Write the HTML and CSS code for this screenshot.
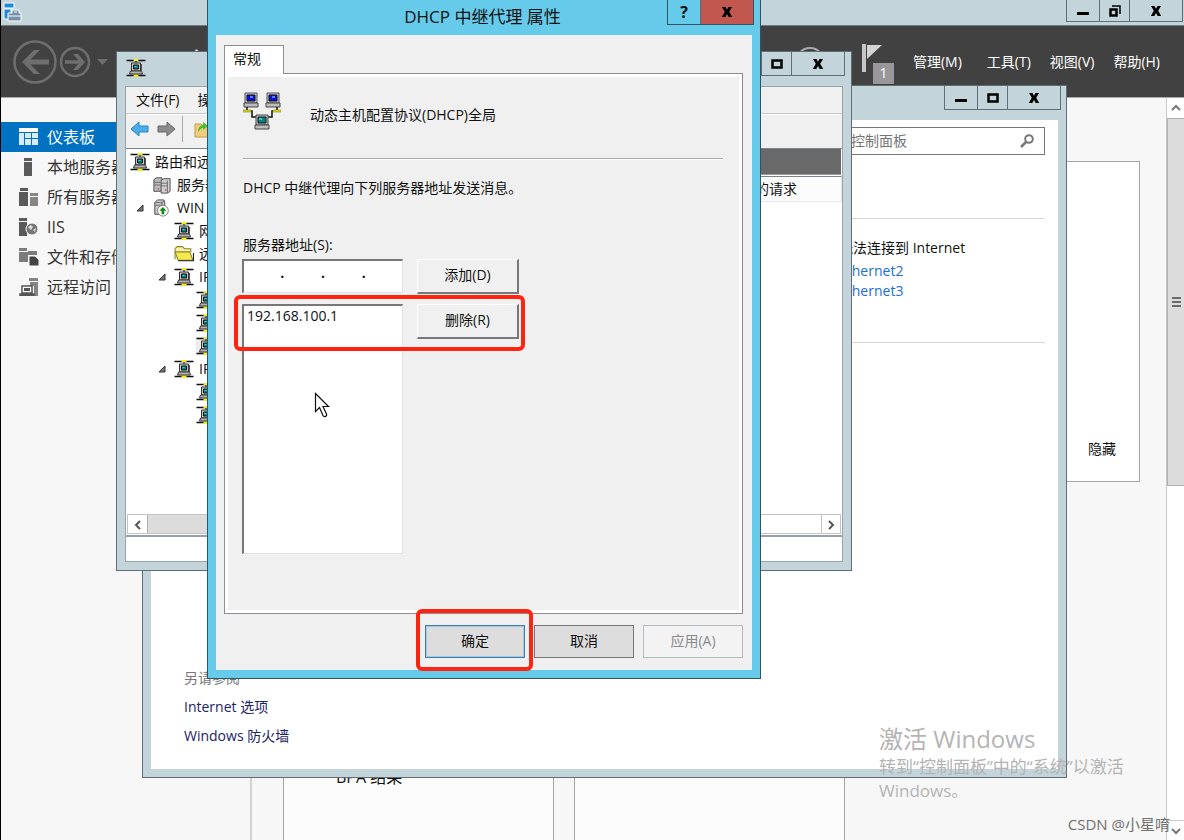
FILE: index.html
```html
<!DOCTYPE html>
<html lang="zh-CN">
<head>
<meta charset="utf-8">
<title>DHCP 中继代理 属性</title>
<link rel="stylesheet" href="styles.css">
</head>
<body>
<svg class="defs" aria-hidden="true">
  <symbol id="net" viewBox="0 0 19 18">
    <path d="M0 1.500h19M0 16.500h19" stroke="#111" stroke-width="1.600"/>
    <path d="M7 0h5v2H7zM7 15h5v3H7z" fill="#f2ee1c"/>
    <path d="M9.500 2v2" stroke="#111"/>
    <path d="M5 4h9v8H5z" fill="#c9c9c9" stroke="#333"/>
    <path d="M7 6h5v4H7z" fill="#087f80" stroke="#111"/>
    <path d="M8 7h2v1H8z" fill="#35e0d8"/>
    <path d="M4 12h11l1 3H3z" fill="#b4b4b4" stroke="#333"/>
    <path d="M15 5v8" stroke="#555"/>
  </symbol>
  <symbol id="servers" viewBox="0 0 20 20">
    <path d="M1 4l3-2h6v14l-2 1H1z" fill="#bcbcbc" stroke="#444"/>
    <path d="M9 5l3-2h7v14l-3 2H9z" fill="#d0d0d0" stroke="#444"/>
    <path d="M1 7h7M1 10h7M9 8h7M9 11h7M16 5v14" stroke="#666"/>
    <path d="M5 14h2v1H5zM13 15h2v1h-2z" fill="#d22"/>
  </symbol>
  <symbol id="host" viewBox="0 0 20 20">
    <path d="M2 4l3-3h7l1 2v14H2z" fill="#c8c8c8" stroke="#444"/>
    <path d="M2 4h8l3-2M2 7h8M10 4v5" stroke="#666" fill="none"/>
    <circle cx="11" cy="13" r="6" fill="#fff" stroke="#777"/>
    <path d="M11 9l4 4h-2.500v4h-3v-4H7z" fill="#118a18"/>
  </symbol>
  <symbol id="folder" viewBox="0 0 19 16">
    <path d="M1 13V3l2-2h5l2 2h6v3" fill="#f8f3a0" stroke="#8a8430"/>
    <path d="M1 6h14l3 8H4z" fill="#f4ea4e" stroke="#8a8430"/>
    <path d="M4 14.500h14.500V7" stroke="#222" fill="none"/>
  </symbol>
  <symbol id="twisty" viewBox="0 0 8 8"><path d="M7 1v6H1z" fill="#777" stroke="#333"/></symbol>
  <symbol id="min" viewBox="0 0 14 12"><path d="M1 7h12v3H1z"/></symbol>
  <symbol id="max" viewBox="0 0 14 12"><path d="M2.500 2.500h9v7h-9z" fill="none" stroke="#000" stroke-width="2.500"/></symbol>
  <symbol id="restore" viewBox="0 0 14 12"><path d="M2.500 4.500h6v6h-6z" fill="none" stroke="#000" stroke-width="2.500"/><path d="M4 1h8v8" fill="none" stroke="#000" stroke-width="1.500"/></symbol>
  <symbol id="close" viewBox="0 0 14 12"><path d="M2 1h3.500l1.500 2.700L8.500 1H12L9.200 5.800 12.200 11H8.700L7 8 5.300 11H1.800l3-5.200z"/></symbol>
</svg>

<main class="desktop">
  <section class="manager">
    <header class="manager-title">
      <svg class="app-icon" viewBox="0 0 20 20"><path d="M1 1h10v5H1zM1 7h7v10H1z" fill="#2089d8" stroke="#fff"/><path d="M5 11h4V8h7v3h2v8H5z" fill="#7592a8" stroke="#fff"/><path d="M5 14h13M11 10h3" stroke="#fff"/></svg>
      <div class="win-buttons">
        <button aria-label="最小化"><svg><use href="#min"/></svg></button>
        <button class="mid" aria-label="还原"><svg><use href="#restore"/></svg></button>
        <button class="wide" aria-label="关闭"><svg><use href="#close"/></svg></button>
      </div>
    </header>
    <div class="banner">
      <svg class="nav-arrows" viewBox="0 0 100 46" fill="none">
        <circle cx="23" cy="23" r="20.500" stroke="#6e6e6e" stroke-width="2.500"/>
        <path d="M10 23L22 11h6L18.500 20.500H37v5H18.500L28 35h-6z" fill="#6e6e6e"/>
        <circle cx="63" cy="23" r="14" stroke="#6e6e6e" stroke-width="2.500"/>
        <path d="M73 23l-7-8h-5l5.500 6.200H53v3.600h13.500L61 31h5z" fill="#6e6e6e"/>
        <path d="M85 20h11l-5.500 6z" fill="#6e6e6e"/>
      </svg>
      <h1 class="banner-title">服务</h1>
      <div class="banner-tools">
        <svg class="refresh" viewBox="0 0 32 32"><circle cx="16" cy="16" r="14" fill="none" stroke="#aaa" stroke-width="2"/></svg>
        <div class="flag">
          <svg viewBox="0 0 20 28"><path d="M0 0h4v28H0z" fill="#c6c6c6"/><path d="M5 1h15L5 15z" fill="#d4d4d4"/></svg>
          <span class="badge">1</span>
        </div>
        <button class="first">管理(M)</button>
        <button>工具(T)</button>
        <button>视图(V)</button>
        <button>帮助(H)</button>
      </div>
    </div>
    <div class="manager-body">
      <nav class="side">
        <a href="#dash" class="on"><svg viewBox="0 0 20 18" fill="#d8ebf8"><path d="M0 0h19v4H0z" fill="#fff"/><path d="M0 5h5v12H0zM6 5h6v5H6zM13 5h6v5h-6zM6 11h6v6H6zM13 11h6v6h-6z"/></svg>仪表板</a>
        <a href="#local"><svg viewBox="0 0 20 18" fill="#5a5a5a"><path d="M5 0h8v3H5zM5 4h8v14H5z"/></svg>本地服务器</a>
        <a href="#all"><svg viewBox="0 0 20 18" fill="#5a5a5a"><path d="M1 0h8v3H1zM0 4h9v14H0z"/><path d="M11 5h8v3h-8zM11 9h8v9h-8z" fill="#858585"/></svg>所有服务器</a>
        <a href="#iis"><svg viewBox="0 0 20 18" fill="#5a5a5a"><path d="M0 0h8v3H0zM0 4h8v14H0z"/><circle cx="13" cy="11" r="6" fill="#777" stroke="#f7f7f7"/><path d="M9 9l3-2 2 2-2 3zM14 12l3-2-1 4z" fill="#ddd"/></svg>IIS</a>
        <a href="#files"><svg viewBox="0 0 20 18" fill="#7c7c7c"><path d="M0 0h8v3H0zM0 4h9v10H0zM9 3h9v4H9z"/><path d="M10 8h6l4 4v6H10z" fill="#444" stroke="#f7f7f7"/></svg>文件和存储服务</a>
        <a href="#remote"><svg viewBox="0 0 20 18"><path d="M10 0h9v3h-9zM11 4h8v14h-4V8h-4z" fill="#858585"/><path d="M3 8h10v7H3zM1 16h14v1.500H1z" fill="#fff" stroke="#555" stroke-width="1.500"/><path d="M5 10h6v3H5z" fill="#555"/></svg>远程访问</a>
      </nav>
      <div class="board">
        <div class="welcome"><button>隐藏</button></div>
        <div class="tiles">
          <div class="tile">BPA 结果</div>
          <div class="tile"></div>
        </div>
      </div>
      <div class="vscroll">
        <button aria-label="向上"><svg viewBox="0 0 10 10"><path d="M1 7l4-4 4 4" fill="none" stroke="#777" stroke-width="2"/></svg></button>
        <div class="thumb"><i></i><i></i><i></i></div>
        <button class="down" aria-label="向下"><svg viewBox="0 0 10 10"><path d="M1 3l4 4 4-4" fill="none" stroke="#777" stroke-width="2"/></svg></button>
      </div>
    </div>
  </section>

  <section class="window control">
    <header class="win-title">
      <div class="win-buttons">
        <button aria-label="最小化"><svg><use href="#min"/></svg></button>
        <button class="mid" aria-label="最大化"><svg><use href="#max"/></svg></button>
        <button class="wide" aria-label="关闭"><svg><use href="#close"/></svg></button>
      </div>
    </header>
    <div class="control-body">
      <div class="search-row">
        <label class="search">
          <input type="text" placeholder="搜索控制面板" aria-label="搜索控制面板">
          <svg viewBox="0 0 14 14"><circle cx="9" cy="5" r="3.800" fill="none" stroke="#777" stroke-width="2"/><path d="M6 8l-5 5" stroke="#777" stroke-width="2.500"/></svg>
        </label>
      </div>
      <div class="net-info">
        <p>无法连接到 Internet</p>
        <a href="#e2">Ethernet2</a>
        <a href="#e3">Ethernet3</a>
      </div>
      <div class="see-also">
        <h2>另请参阅</h2>
        <a href="#opt">Internet 选项</a>
        <a href="#fw">Windows 防火墙</a>
      </div>
    </div>
  </section>

  <section class="window routing">
    <header class="win-title">
      <svg class="net title-net"><use href="#net"/></svg>
      <div class="win-buttons">
        <button aria-label="最小化"><svg><use href="#min"/></svg></button>
        <button class="mid" aria-label="最大化"><svg><use href="#max"/></svg></button>
        <button class="wide" aria-label="关闭"><svg><use href="#close"/></svg></button>
      </div>
    </header>
    <div class="routing-body">
      <div class="menu"><button>文件(F)</button><button>操作(A)</button></div>
      <div class="toolbar">
        <svg viewBox="0 0 20 16"><path d="M1 8l8-7v4h9v6H9v4z" fill="#49adea" stroke="#2d83bd"/></svg>
        <svg viewBox="0 0 20 16"><path d="M19 8l-8-7v4H2v6h9v4z" fill="#8c8c8c" stroke="#666"/></svg>
        <span class="bar"></span>
        <svg viewBox="0 0 20 18"><path d="M1 4h6l2 2h10v11H1z" fill="#f0cd7c" stroke="#c79a3e"/><path d="M4 12c0-5 3-7 5-7V2l5 4-5 4V8c-2 0-3 2-5 4z" fill="#4cbb2f"/></svg>
      </div>
      <div class="panes">
        <div class="tree-pane">
          <ul class="tree">
            <li><svg class="net"><use href="#net"/></svg>路由和远程</li>
            <li class="l1"><svg class="net"><use href="#servers"/></svg>服务器</li>
            <li class="l1"><svg class="twisty"><use href="#twisty"/></svg><svg class="net"><use href="#host"/></svg>WIN</li>
            <li class="l2"><svg class="net"><use href="#net"/></svg>网络</li>
            <li class="l2"><svg class="net"><use href="#folder"/></svg>远程</li>
            <li class="l2"><svg class="twisty"><use href="#twisty"/></svg><svg class="net"><use href="#net"/></svg>IPv4</li>
            <li class="l3"><svg class="net"><use href="#net"/></svg></li>
            <li class="l3"><svg class="net"><use href="#net"/></svg></li>
            <li class="l3 sel"><svg class="net"><use href="#net"/></svg></li>
            <li class="l2"><svg class="twisty"><use href="#twisty"/></svg><svg class="net"><use href="#net"/></svg>IPv6</li>
            <li class="l3"><svg class="net"><use href="#net"/></svg></li>
            <li class="l3"><svg class="net"><use href="#net"/></svg></li>
          </ul>
          <div class="hscroll">
            <button aria-label="向左"><svg viewBox="0 0 10 10"><path d="M7 1L3 5l4 4" fill="none" stroke="#555" stroke-width="2"/></svg></button>
            <div class="hthumb"></div>
          </div>
        </div>
        <div class="detail-pane">
          <div class="band"></div>
          <div class="list-head">的请求</div>
          <div class="hscroll right">
            <button aria-label="向右"><svg viewBox="0 0 10 10"><path d="M3 1l4 4-4 4" fill="none" stroke="#555" stroke-width="2"/></svg></button>
          </div>
        </div>
      </div>
      <div class="status"></div>
    </div>
  </section>

  <section class="dialog" role="dialog" aria-labelledby="dlg-title">
    <header class="dialog-title">
      <h2 id="dlg-title">DHCP 中继代理 属性</h2>
      <div class="win-buttons">
        <button class="help" aria-label="帮助">?</button>
        <button class="wide red" aria-label="关闭"><svg><use href="#close"/></svg></button>
      </div>
    </header>
    <form class="dialog-body">
      <div class="tabs"><button type="button" class="tab">常规</button></div>
      <div class="sheet">
        <div class="intro">
          <svg class="dhcp" viewBox="0 0 38 38">
            <g id="pc"><path d="M2 1h12v10H2z" fill="#c6c6c6" stroke="#555"/><path d="M4 3h8v6H4z" fill="#0a12d8" stroke="#111"/><path d="M7 4h3v2H7z" fill="#5c7cf0"/><path d="M1 11h14v4H1z" fill="#bdbdbd" stroke="#444"/></g>
            <use href="#pc" x="22"/>
            <path d="M4 15v4h5v6h5M34 15v4h-5v6h-5" fill="none" stroke="#111" stroke-width="1.500"/>
            <path d="M0 18h8v2H0zM30 18h8v2h-8z" fill="#dfd81a" stroke="#8a8610" stroke-width=".6"/>
            <path d="M13 23h12v10H13z" fill="#c6c6c6" stroke="#444"/><path d="M15 25h8v6h-8z" fill="#078484" stroke="#111"/><path d="M16 26h3v2h-3z" fill="#3cc"/><path d="M12 33h14v4H12z" fill="#bdbdbd" stroke="#444"/>
          </svg>
          <span>动态主机配置协议(DHCP)全局</span>
        </div>
        <p class="note">DHCP 中继代理向下列服务器地址发送消息。</p>
        <label class="addr-label" for="ip1">服务器地址(S):</label>
        <div class="row">
          <div class="ip"><input id="ip1" type="text"><b>·</b><input type="text" aria-label="2"><b>·</b><input type="text" aria-label="3"><b>·</b><input type="text" aria-label="4"></div>
          <button type="button" class="classic">添加(D)</button>
        </div>
        <div class="row">
          <select class="list" size="10" aria-label="服务器地址"><option>192.168.100.1</option></select>
          <button type="button" class="classic">删除(R)</button>
        </div>
      </div>
      <div class="actions">
        <button type="button" class="default">确定</button>
        <button type="button">取消</button>
        <button type="button" disabled>应用(A)</button>
      </div>
    </form>
    <div class="mark mark-list"></div>
    <div class="mark mark-ok"></div>
    <svg class="cursor" viewBox="0 0 16 26"><path d="M1.500 1.500v18l4-4 3.500 8c1 2 4.500 1 3.500-1.500L9 14.500h5.500z" fill="#fff" stroke="#111" stroke-width="1.200"/></svg>
  </section>

  <div class="activate"><strong>激活 Windows</strong><span>转到“控制面板”中的“系统”以激活 Windows。</span></div>
  <div class="credit">CSDN @小星唷</div>
</main>
</body>
</html>
```
FILE: styles.css
```css
* { box-sizing: border-box; }
body {
  margin: 0;
  font: 14px/20px "Open Sans", "Noto Sans CJK SC", sans-serif;
  color: #111;
}
button, input, select { font: inherit; color: inherit; }
button { margin: 0; padding: 0; border: 0; background: none; white-space: nowrap; }
h1, h2, p, ul { margin: 0; padding: 0; font-weight: normal; }
a { text-decoration: none; }
.defs { position: absolute; width: 0; height: 0; }

.desktop { position: relative; height: 100vh; overflow: hidden; }

/* window caption buttons */
.win-buttons { display: flex; align-self: flex-start; border: 1px solid #5f6d75; border-top: 0; }
.win-buttons button { width: 32px; height: 23px; display: grid; place-items: center; }
.win-buttons button + button { border-left: 1px solid #5f6d75; }
.win-buttons .mid { width: 30px; }
.win-buttons .wide { width: 53px; }
.win-buttons svg { width: 14px; height: 12px; }

/* server manager */
.manager { height: 100%; display: flex; flex-direction: column; border-left: 1px solid #000; background: #f7f7f7; }
.manager-title { height: 26px; display: flex; justify-content: space-between; padding: 0 1px 0 2px; background: #c3d5db; border-bottom: 1px solid #6f7d84; }
.manager-title .win-buttons button { height: 21px; }
.app-icon { width: 20px; height: 20px; margin-top: 2px; }
.banner { height: 72px; flex: none; display: flex; align-items: center; padding: 0 24px 0 11px; background: #414141; border-bottom: 1px solid #aaa; color: #fff; }
.nav-arrows { width: 100px; height: 46px; }
.banner-title { margin-left: 48px; font-size: 26px; line-height: 32px; }
.banner-tools { flex: 1; display: flex; justify-content: flex-end; align-items: center; gap: 19px; }
.banner-tools .first { margin-right: 6px; }
.refresh { width: 32px; height: 32px; margin-right: 17px; }
.flag { position: relative; width: 32px; height: 40px; margin-top: 4px; }
.flag svg { width: 20px; height: 28px; display: block; }
.badge { position: absolute; right: 0; bottom: 0; width: 21px; height: 21px; background: #9a979b; text-align: center; }

.manager-body { flex: 1; min-height: 0; display: flex; }
.side { width: 251px; padding-top: 24px; border-right: 2px solid #d2d2d2; }
.side a { display: flex; align-items: center; gap: 8px; height: 30px; padding-left: 18px; font-size: 16px; color: #333; }
.side svg { width: 20px; height: 18px; }
.side .on { background: #0072c1; color: #fff; }
.board { flex: 1; display: flex; flex-direction: column; gap: 40px; padding: 63px 26px 0 31px; }
.welcome { height: 321px; flex: none; display: flex; justify-content: flex-end; align-items: flex-end; padding: 0 23px 22px; background: #fff; border: 1px solid #a5a5a5; }
.tiles { flex: 1; display: grid; grid-template-columns: 271px 271px; gap: 20px; }
.tile { display: flex; align-items: flex-end; padding: 0 0 53px 52px; font-size: 16px; background: #fcfcfc; border: 1px solid #a5a5a5; border-bottom: 0; }
.vscroll { width: 18px; display: flex; flex-direction: column; background: #fff; border-left: 1px solid #c8c8c8; }
.vscroll button { height: 20px; background: #fff; }
.vscroll svg { width: 10px; height: 10px; }
.vscroll .down { margin-top: auto; border-top: 1px solid #ccc; }
.thumb { height: 368px; display: flex; flex-direction: column; align-items: center; justify-content: center; gap: 2px; background: #dcdcdc; border: 1px solid #b0b0b0; border-right: 0; }
.thumb i { width: 9px; height: 2px; background: #6b6b6b; }

/* shared window frame */
.window { position: absolute; display: flex; flex-direction: column; padding: 0 8px 8px; background: #c3d5db; border: 1px solid #5f6d75; }
.win-title { height: 34px; flex: none; display: flex; justify-content: space-between; }
.win-title .win-buttons { margin: 0 -3px 0 auto; }

.control { left: 142px; top: 85px; width: 925px; height: 693px; }
.control-body { flex: 1; display: flex; flex-direction: column; background: #fff; padding: 7px 13px 23px 33px; }
.search-row { height: 92px; border-bottom: 1px solid #d5d5d5; display: flex; justify-content: flex-end; align-items: flex-start; }
.search { width: 232px; height: 28px; display: flex; align-items: center; padding: 0 10px 0 9px; border: 1px solid #777; }
.search input { flex: 1; min-width: 0; border: 0; padding: 0; background: none; outline: 0; }
.search input::placeholder { color: #757575; }
.search svg { width: 14px; height: 14px; }
.net-info { height: 124px; padding: 19px 0 0 655px; border-bottom: 1px solid #d5d5d5; }
.net-info p { margin-bottom: 3px; }
.net-info a { display: block; color: #1a6fd0; }
.see-also { margin-top: auto; }
.see-also h2 { font-size: 14px; line-height: 20px; color: #777; }
.see-also a { display: block; margin-top: 9px; color: #1a2268; }

.routing { left: 116px; top: 51px; width: 736px; height: 520px; }
.routing .win-buttons { margin-right: -2px; }
.title-net { margin: 7px 0 0 1px; }
.routing-body { flex: 1; min-height: 0; display: flex; flex-direction: column; background: #f0f0f0; border: 1px solid #9aa5ab; }
.menu { height: 27px; flex: none; display: flex; gap: 18px; padding-left: 10px; border-bottom: 1px solid #c8c8c8; }
.toolbar { height: 34px; flex: none; display: flex; align-items: flex-start; gap: 6px; padding: 5px 0 0 4px; border-top: 1px solid #fff; }
.toolbar svg { width: 20px; height: 18px; }
.toolbar .bar { width: 1px; height: 26px; margin: -4px 5px 0 0; background: #a8a8a8; }
.panes { flex: 1; min-height: 0; display: flex; border-top: 1px solid #7b838c; border-bottom: 2px solid #9a9fa5; }
.tree-pane { width: 300px; display: flex; flex-direction: column; background: #fff; border-right: 1px solid #7b838c; }
.tree { flex: 1; padding-top: 1px; list-style: none; }
.tree li { height: 23px; display: flex; align-items: center; gap: 5px; padding-left: 4px; }
.net { width: 20px; height: 18px; flex: none; }
.tree .l1 { padding-left: 26px; }
.tree .l2 { padding-left: 48px; }
.tree .l3 { padding-left: 70px; }
.twisty { width: 8px; height: 8px; margin: 0 3px 0 -16px; }
.tree .sel svg { background: #ececec; }
.hscroll { height: 20px; margin: 0 1px 1px; display: flex; background: #fff; border: 1px solid #c4c4c4; }
.hscroll button { width: 19px; background: #fff; }
.hscroll svg { width: 10px; height: 10px; }
.hthumb { flex: 1; background: #dcdcdc; border-left: 1px solid #b0b0b0; }
.detail-pane { flex: 1; display: flex; flex-direction: column; background: #fff; }
.band { height: 26px; background: #696969; margin-right: 1px; border-bottom: 1px solid #999; }
.list-head { height: 26px; margin: 1px 0 0; padding: 2px 0 0 328px; background: #fcfcfc; border: 1px solid #e6e6e6; border-top-color: #7b838c; }
.right { margin-top: auto; justify-content: flex-end; }
.right button { border-left: 1px solid #c4c4c4; }
.status { height: 24px; flex: none; background: #fff; }

/* properties dialog */
.dialog { position: absolute; left: 207px; top: -1px; width: 554px; height: 680px; display: flex; flex-direction: column; padding: 0 8px 8px; background: #66cbea; border: 1px solid #34525f; }
.dialog-title { height: 35px; flex: none; display: flex; justify-content: flex-end; }
.dialog-title h2 { flex: 1; padding-left: 82px; font-size: 17px; line-height: 34px; text-align: center; }
.dialog-title .win-buttons { margin-right: -2px; border-color: #34525f; }
.dialog-title button { height: 24px; }
.help { font-weight: bold; font-size: 16px; }
.red { background: #c1574f; }
.dialog-body { flex: 1; display: flex; flex-direction: column; padding: 10px 9px 12px 8px; background: #f0f0f0; }
.tabs { display: flex; }
.tab { width: 60px; height: 29px; margin-bottom: -1px; padding: 0 14px 2px 0; z-index: 1; background: #fff; border: 1px solid #8c8e96; border-bottom: 0; }
.sheet { flex: 1; padding: 14px 15px 0; background: #f0f0f0; border: 1px solid #8c8e96; box-shadow: inset 0 0 0 3px #fff; }
.intro { height: 71px; display: flex; align-items: flex-start; gap: 29px; margin: 0 4px 0 3px; padding-top: 4px; border-bottom: 1px solid #aaa; box-shadow: 0 1px #fff; }
.dhcp { width: 38px; height: 38px; }
.intro span { padding-top: 13px; }
.note { margin: 19px 3px 0; }
.addr-label { display: block; margin: 37px 3px 0; }
.row { display: flex; align-items: flex-start; gap: 14px; margin: 4px 2px 10px; }
.ip, .list { width: 161px; background: #fff; border: 1px solid #e3e3e3; border-top: 2px solid #777; border-left: 2px solid #777; border-radius: 0; }
.ip { height: 34px; display: flex; align-items: center; }
.ip input { flex: 1; min-width: 0; padding: 0; border: 0; outline: 0; background: none; text-align: center; }
.ip b { width: 5px; text-align: center; line-height: 28px; }
.list { height: 250px; padding: 0; outline: 0; overflow: hidden; }
.list option { padding: 0 3px; min-height: 20px; }
.classic { width: 102px; height: 35px; padding-bottom: 2px; border: 1px solid #fff; border-right: 2px solid #777; border-bottom: 2px solid #777; }
.actions { display: flex; justify-content: flex-end; gap: 9px; padding-top: 11px; }
.actions button { width: 100px; height: 33px; padding-bottom: 1px; background: #ddd; border: 1px solid #777; }
.actions .default { border-color: #3c7fb1; box-shadow: inset 0 0 0 1px #a5c8e0; }
.actions button:disabled { background: #f3f3f3; border-color: #b4babd; color: #8a8a8a; }

/* annotations over the dialog */
.mark { position: absolute; border: 4px solid #ff2312; border-radius: 6px; }
.mark-list { left: 26px; top: 295px; width: 291px; height: 56px; }
.mark-ok { left: 208px; top: 609px; width: 117px; height: 62px; }
.cursor { position: absolute; left: 106px; top: 392px; width: 16px; height: 26px; }

.activate { position: absolute; left: 879px; top: 723px; width: 280px; color: #b4b4b4; font-size: 17px; line-height: 24px; }
.activate strong { display: block; font-size: 24px; line-height: 32px; font-weight: normal; }
.credit { position: absolute; right: 14px; bottom: 6px; color: #707070; font-size: 15px; }
```
